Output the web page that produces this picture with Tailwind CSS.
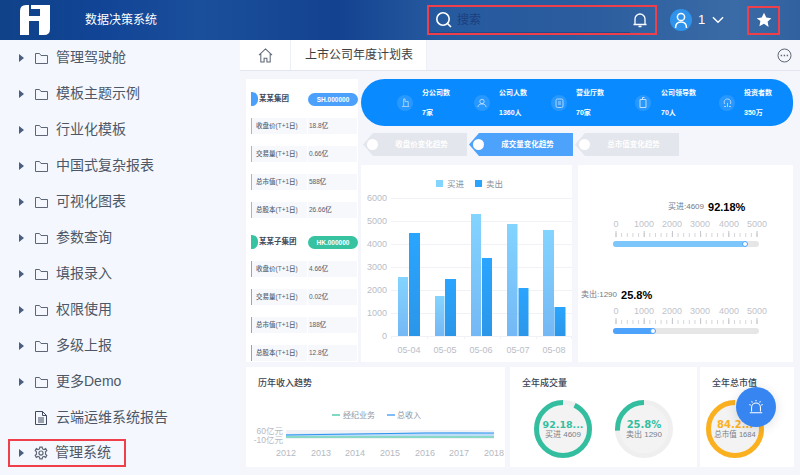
<!DOCTYPE html>
<html lang="zh-CN">
<head>
  <meta charset="UTF-8">
  <title>数据决策系统</title>
  <script src="https://cdn.jsdelivr.net/npm/@tailwindcss/browser@4"></script>
</head>
<body class="w-[800px] h-[475px] overflow-hidden bg-[#f5f6fb] font-['Liberation_Sans','Noto_Sans_CJK_SC',sans-serif]">
  <!-- header -->
  <header class="h-10 flex items-center text-white bg-[linear-gradient(90deg,#0f4288_0%,#114495_12%,#1a4f9c_25%,#134290_42%,#265a9f_55%,#2a5c9e_72%,#3a6ba6_92%,#31629f_100%)]">
    <svg class="ml-5 w-[30px] h-[30px] shrink-0" viewBox="0 0 30 30">
      <path fill="#fff" d="M6 0H9V11H20V4H11V0H30V24Q30 30 24 30H19V16H9V30H0V6Q0 0 6 0Z"/>
    </svg>
    <span class="ml-[35px] text-[12px] w-[342px]">数据决策系统</span>
    <div class="w-[230px] h-[30px] border-2 border-[#ef3f4a] flex items-center pr-[7px]">
      <div class="w-[201px] h-[26px] border-b border-[#1f4b8f] flex items-center pl-[6px]">
        <svg class="w-[18px] h-[18px]" viewBox="0 0 18 18" fill="none" stroke="#fff" stroke-width="1.6"><circle cx="8" cy="8" r="6.2"/><path d="M12.6 12.6L16 16"/></svg>
        <span class="ml-[4px] text-[12px] text-[#1c3f7d]">搜索</span>
      </div>
      <svg class="ml-auto w-[16px] h-[16px]" viewBox="0 0 16 16" fill="none" stroke="#fff" stroke-width="1.3"><path d="M3 12V7a5 5 0 0 1 10 0v5M1.500 12.500h13M6.500 14.500h3"/></svg>
    </div>
    <div class="ml-[13px] w-[22px] h-[22px] rounded-full bg-[#2f93ec] flex items-center justify-center">
      <svg class="w-[16px] h-[18px]" viewBox="0 0 16 18" fill="none" stroke="#fff" stroke-width="1.5"><circle cx="8" cy="6" r="3.600"/><path d="M2.500 17c0-4 2.200-6 5.500-6s5.500 2 5.500 6"/></svg>
    </div>
    <span class="ml-[6px] text-[13px]">1</span>
    <svg class="ml-[7px] w-[12px] h-[8px]" viewBox="0 0 13 8" fill="none" stroke="#fff" stroke-width="1.500"><path d="M1 1l5.500 5.500L12 1"/></svg>
    <div class="ml-[23px] w-[33px] h-[29px] border-2 border-[#ef3f4a] flex items-center justify-center">
      <svg class="w-[16px] h-[16px]" viewBox="0 0 24 24" fill="#fff"><path d="M12 1l3.400 7.200 7.600 1-5.600 5.400 1.500 7.800L12 17.600l-6.900 3.800 1.500-7.800L1 9.200l7.600-1z"/></svg>
    </div>
  </header>

  <div class="flex h-[435px]">
    <!-- sidebar -->
    <nav class="w-[240px] shrink-0 bg-[#f5f7fe] text-[14px] text-[#4e5766]">
      <a class="h-9 flex items-center pl-[19px]"><i class="w-0 h-0 border-y-[4px] border-y-transparent border-l-[5px] border-l-[#4a5f80]"></i><svg class="ml-[11px] w-[13px] h-[11px]" viewBox="0 0 13 11" fill="none" stroke="#5d6675"><path d="M.5 .5h4l1.500 2h6.500v8H.5z"/></svg><span class="ml-[8px] pb-[2px]">管理驾驶舱</span></a>
      <a class="h-9 flex items-center pl-[19px]"><i class="w-0 h-0 border-y-[4px] border-y-transparent border-l-[5px] border-l-[#4a5f80]"></i><svg class="ml-[11px] w-[13px] h-[11px]" viewBox="0 0 13 11" fill="none" stroke="#5d6675"><path d="M.5 .5h4l1.500 2h6.500v8H.5z"/></svg><span class="ml-[8px] pb-[2px]">模板主题示例</span></a>
      <a class="h-9 flex items-center pl-[19px]"><i class="w-0 h-0 border-y-[4px] border-y-transparent border-l-[5px] border-l-[#4a5f80]"></i><svg class="ml-[11px] w-[13px] h-[11px]" viewBox="0 0 13 11" fill="none" stroke="#5d6675"><path d="M.5 .5h4l1.500 2h6.500v8H.5z"/></svg><span class="ml-[8px] pb-[2px]">行业化模板</span></a>
      <a class="h-9 flex items-center pl-[19px]"><i class="w-0 h-0 border-y-[4px] border-y-transparent border-l-[5px] border-l-[#4a5f80]"></i><svg class="ml-[11px] w-[13px] h-[11px]" viewBox="0 0 13 11" fill="none" stroke="#5d6675"><path d="M.5 .5h4l1.500 2h6.500v8H.5z"/></svg><span class="ml-[8px] pb-[2px]">中国式复杂报表</span></a>
      <a class="h-9 flex items-center pl-[19px]"><i class="w-0 h-0 border-y-[4px] border-y-transparent border-l-[5px] border-l-[#4a5f80]"></i><svg class="ml-[11px] w-[13px] h-[11px]" viewBox="0 0 13 11" fill="none" stroke="#5d6675"><path d="M.5 .5h4l1.500 2h6.500v8H.5z"/></svg><span class="ml-[8px] pb-[2px]">可视化图表</span></a>
      <a class="h-9 flex items-center pl-[19px]"><i class="w-0 h-0 border-y-[4px] border-y-transparent border-l-[5px] border-l-[#4a5f80]"></i><svg class="ml-[11px] w-[13px] h-[11px]" viewBox="0 0 13 11" fill="none" stroke="#5d6675"><path d="M.5 .5h4l1.500 2h6.500v8H.5z"/></svg><span class="ml-[8px] pb-[2px]">参数查询</span></a>
      <a class="h-9 flex items-center pl-[19px]"><i class="w-0 h-0 border-y-[4px] border-y-transparent border-l-[5px] border-l-[#4a5f80]"></i><svg class="ml-[11px] w-[13px] h-[11px]" viewBox="0 0 13 11" fill="none" stroke="#5d6675"><path d="M.5 .5h4l1.500 2h6.500v8H.5z"/></svg><span class="ml-[8px] pb-[2px]">填报录入</span></a>
      <a class="h-9 flex items-center pl-[19px]"><i class="w-0 h-0 border-y-[4px] border-y-transparent border-l-[5px] border-l-[#4a5f80]"></i><svg class="ml-[11px] w-[13px] h-[11px]" viewBox="0 0 13 11" fill="none" stroke="#5d6675"><path d="M.5 .5h4l1.500 2h6.500v8H.5z"/></svg><span class="ml-[8px] pb-[2px]">权限使用</span></a>
      <a class="h-9 flex items-center pl-[19px]"><i class="w-0 h-0 border-y-[4px] border-y-transparent border-l-[5px] border-l-[#4a5f80]"></i><svg class="ml-[11px] w-[13px] h-[11px]" viewBox="0 0 13 11" fill="none" stroke="#5d6675"><path d="M.5 .5h4l1.500 2h6.500v8H.5z"/></svg><span class="ml-[8px] pb-[2px]">多级上报</span></a>
      <a class="h-9 flex items-center pl-[19px]"><i class="w-0 h-0 border-y-[4px] border-y-transparent border-l-[5px] border-l-[#4a5f80]"></i><svg class="ml-[11px] w-[13px] h-[11px]" viewBox="0 0 13 11" fill="none" stroke="#5d6675"><path d="M.5 .5h4l1.500 2h6.500v8H.5z"/></svg><span class="ml-[8px] pb-[2px]">更多Demo</span></a>
      <a class="h-9 flex items-center pl-[35px]"><svg class="w-[12px] h-[14px]" viewBox="0 0 12 14" fill="none" stroke="#3f4a5c"><path d="M.5 .5h7l4 4v9H.5zM7.500 .5v4h4M3 7h6M3 9h6M3 11h6"/></svg><span class="ml-[9px] pb-[2px]">云端运维系统报告</span></a>
      <div class="ml-2 w-[118px] h-7 mt-[3px] border-2 border-[#ef3f4a] flex items-center pl-[9px]"><i class="w-0 h-0 border-y-[4px] border-y-transparent border-l-[5px] border-l-[#4a5f80]"></i><svg class="ml-[10px] w-[14px] h-[14px]" viewBox="0 0 24 24" fill="none" stroke="#5d6675" stroke-width="2"><circle cx="12" cy="12" r="3.500"/><path d="M10 2h4l.6 3 2.600 1.100L20 4.500 22 8l-2.300 2 .1 2-.1 2 2.300 2-2 3.500-2.800-1.600-2.600 1.100-.6 3h-4l-.6-3-2.600-1.100L4 19.500 2 16l2.300-2-.1-2 .1-2L2 8l2-3.500 2.800 1.600L9.400 5z"/></svg><span class="ml-[7px] pb-[2px]">管理系统</span></div>
    </nav>

    <main class="relative flex-1 min-w-0">
      <!-- tabs -->
      <div class="h-[31px] flex items-center border-b border-[#e3e6ef] text-[#404040]">
        <div class="w-[51px] h-[30px] bg-white border-r border-[#eceff5] flex items-center justify-center">
          <svg class="w-[15px] h-[15px]" viewBox="0 0 16 16" fill="none" stroke="#5d6675" stroke-width="1.100"><path d="M1 7.500 8 1l7 6.500M3 6v9h3.500v-4h3v4H13V6"/></svg>
        </div>
        <div class="w-[136px] h-[30px] bg-white border-r border-[#eceff5] flex items-center pl-[14px] text-[12px]">上市公司年度计划表</div>
        <svg class="ml-auto mr-[8px] w-[15px] h-[15px]" viewBox="0 0 15 15" fill="none" stroke="#5d6675"><circle cx="7.500" cy="7.500" r="6.500"/><path stroke-width="1.400" stroke-dasharray="1.400 1.600" d="M3.700 7.500h8"/></svg>
      </div>

      <div class="flex pt-2 pl-[6px]">
        <!-- company column -->
        <section class="w-[112px] h-[283px] bg-white pl-[5px] pt-[13px] text-[6.5px] font-medium text-[#56606f]">
          <div class="h-[14px] flex items-center">
            <i class="w-[7px] h-[14px] bg-[#4ba0fb] rounded-r-[6px]"></i>
            <b class="ml-[1px] w-[49px] text-[7.500px] text-[#3f4a5c]">某某集团</b>
            <span class="w-[50px] h-[13px] rounded-full bg-[#4ba0fb] text-white font-bold text-center leading-[13px]">SH.000000</span>
          </div>
          <div class="mt-3 h-4 flex"><span class="w-[56px] bg-[#f7f8fb] border-l border-[#7cc3fa] pl-[4px] leading-4">收盘价(T+1日)</span><span class="ml-[1px] w-[49px] bg-[#f7f8fb] pl-[1px] leading-4">18.8亿</span></div>
          <div class="mt-3 h-4 flex"><span class="w-[56px] bg-[#f7f8fb] border-l border-[#7cc3fa] pl-[4px] leading-4">交易量(T+1日)</span><span class="ml-[1px] w-[49px] bg-[#f7f8fb] pl-[1px] leading-4">0.66亿</span></div>
          <div class="mt-3 h-4 flex"><span class="w-[56px] bg-[#f7f8fb] border-l border-[#7cc3fa] pl-[4px] leading-4">总市值(T+1日)</span><span class="ml-[1px] w-[49px] bg-[#f7f8fb] pl-[1px] leading-4">588亿</span></div>
          <div class="mt-3 h-4 flex"><span class="w-[56px] bg-[#f7f8fb] border-l border-[#7cc3fa] pl-[4px] leading-4">总股本(T+1日)</span><span class="ml-[1px] w-[49px] bg-[#f7f8fb] pl-[1px] leading-4">26.66亿</span></div>
          <div class="mt-[17px] h-[14px] flex items-center">
            <i class="w-[7px] h-[14px] bg-[#37c2a2] rounded-r-[6px]"></i>
            <b class="ml-[1px] w-[49px] text-[7.500px] text-[#3f4a5c]">某某子集团</b>
            <span class="w-[50px] h-[13px] rounded-full bg-[#37c2a2] text-white font-bold text-center leading-[13px]">HK.000000</span>
          </div>
          <div class="mt-3 h-4 flex"><span class="w-[56px] bg-[#f7f8fb] border-l border-[#4fcbae] pl-[4px] leading-4">收盘价(T+1日)</span><span class="ml-[1px] w-[49px] bg-[#f7f8fb] pl-[1px] leading-4">4.66亿</span></div>
          <div class="mt-3 h-4 flex"><span class="w-[56px] bg-[#f7f8fb] border-l border-[#4fcbae] pl-[4px] leading-4">交易量(T+1日)</span><span class="ml-[1px] w-[49px] bg-[#f7f8fb] pl-[1px] leading-4">0.02亿</span></div>
          <div class="mt-3 h-4 flex"><span class="w-[56px] bg-[#f7f8fb] border-l border-[#4fcbae] pl-[4px] leading-4">总市值(T+1日)</span><span class="ml-[1px] w-[49px] bg-[#f7f8fb] pl-[1px] leading-4">188亿</span></div>
          <div class="mt-3 h-4 flex"><span class="w-[56px] bg-[#f7f8fb] border-l border-[#4fcbae] pl-[4px] leading-4">总股本(T+1日)</span><span class="ml-[1px] w-[49px] bg-[#f7f8fb] pl-[1px] leading-4">12.8亿</span></div>
        </section>

        <div class="ml-[3px] w-[432px]">
          <!-- stats banner -->
          <div class="h-[47px] bg-[#0a8aff] rounded-[24px] rounded-r-[22px] pl-[36px] flex items-center text-white text-[7px] font-bold">
            <div class="w-[77px] flex items-center"><span class="w-4 h-4 rounded-full bg-white/12 flex items-center justify-center"><svg class="w-[9px] h-[9px]" viewBox="0 0 10 10" fill="none" stroke="#cfe6ff" stroke-width=".8"><path d="M1 9.500h8M3 9V1h1.500v3H8v5"/></svg></span><div class="ml-[9px] flex flex-col gap-[9px] leading-[11px]"><span>分公司数</span><span>7家</span></div></div>
            <div class="w-[77px] flex items-center"><span class="w-4 h-4 rounded-full bg-white/12 flex items-center justify-center"><svg class="w-[10px] h-[10px]" viewBox="0 0 10 10" fill="none" stroke="#cfe6ff" stroke-width=".8"><circle cx="5" cy="3.500" r="2.200"/><path d="M1 9c0-2 1.500-3 4-3s4 1 4 3"/></svg></span><div class="ml-[9px] flex flex-col gap-[9px] leading-[11px]"><span>公司人数</span><span>1360人</span></div></div>
            <div class="w-[84px] flex items-center"><span class="w-4 h-4 rounded-full bg-white/12 flex items-center justify-center"><svg class="w-[9px] h-[10px]" viewBox="0 0 9 10" fill="none" stroke="#cfe6ff" stroke-width=".8"><rect x="1" y="1" width="7" height="8.500" rx="1.500"/><path d="M3 4h3M3 6h3"/></svg></span><div class="ml-[9px] flex flex-col gap-[9px] leading-[11px]"><span>营业厅数</span><span>70家</span></div></div>
            <div class="w-[84px] flex items-center"><span class="w-4 h-4 rounded-full bg-white/12 flex items-center justify-center"><svg class="w-[8px] h-[11px]" viewBox="0 0 8 11" fill="none" stroke="#cfe6ff" stroke-width=".9"><path d="M1 2.500h6v8H1zM3.500 2.500V.5h2"/></svg></span><div class="ml-[10px] flex flex-col gap-[9px] leading-[11px]"><span>公司领导数</span><span>70人</span></div></div>
            <div class="flex items-center"><span class="w-4 h-4 rounded-full bg-white/12 flex items-center justify-center"><svg class="w-[9px] h-[10px]" viewBox="0 0 9 10" fill="none" stroke="#cfe6ff" stroke-width=".8"><path d="M1.500 6c-1-3 .5-5 3-5s4 2 3 5M1 8.500h2M6 8.500h2M4.500 5v4"/></svg></span><div class="ml-[9px] flex flex-col gap-[9px] leading-[11px]"><span>投资者数</span><span>350万</span></div></div>
          </div>
          <!-- trend tabs -->
          <div class="mt-[7px] ml-[2px] flex gap-[2px] text-[7.500px] font-bold text-white">
            <div class="relative w-[104px] h-[23px] bg-[#e3e6ec] [clip-path:polygon(10px_0,100%_0,100%_100%,10px_100%,0_50%)] flex items-center justify-center pl-[13px]"><i class="absolute left-[4px] top-[6px] w-[11px] h-[11px] rounded-full bg-white"></i>收盘价变化趋势</div>
            <div class="relative w-[104px] h-[23px] bg-[#4da2fb] [clip-path:polygon(10px_0,100%_0,100%_100%,10px_100%,0_50%)] flex items-center justify-center pl-[13px]"><i class="absolute left-[4px] top-[6px] w-[11px] h-[11px] rounded-full bg-white"></i>成交量变化趋势</div>
            <div class="relative w-[104px] h-[23px] bg-[#e3e6ec] [clip-path:polygon(10px_0,100%_0,100%_100%,10px_100%,0_50%)] flex items-center justify-center pl-[13px]"><i class="absolute left-[4px] top-[6px] w-[11px] h-[11px] rounded-full bg-white"></i>总市值变化趋势</div>
          </div>
          <div class="mt-[9px] flex gap-[6px]">
            <!-- bar chart -->
            <div class="w-[211px] h-[197px] bg-white">
              <svg class="block" width="211" height="197" viewBox="361 165 211 197" font-size="9" fill="#b9bdc7">
                <defs>
                  <linearGradient id="buy" x1="0" y1="0" x2="0" y2="1"><stop offset="0" stop-color="#83d4ff"/><stop offset="1" stop-color="#74b8f5"/></linearGradient>
                  <linearGradient id="sell" x1="0" y1="0" x2="0" y2="1"><stop offset="0" stop-color="#2aa5ff"/><stop offset="1" stop-color="#2b96e8"/></linearGradient>
                </defs>
                <rect x="436" y="180" width="7" height="7" fill="#83d4ff"/><text x="447" y="187" font-size="8.500" fill="#8a8f99">买进</text>
                <rect x="475" y="180" width="7" height="7" fill="#2aa5ff"/><text x="486" y="187" font-size="8.500" fill="#8a8f99">卖出</text>
                <path stroke="#f0f2f6" d="M391 198.500h181M391 221.500h181M391 244.500h181M391 267.500h181M391 290.500h181M391 313.500h181M391 336.500h181M391.500 336v3M427.500 336v3M464.500 336v3M500.500 336v3M536.500 336v3M571.500 336v3"/>
                <g text-anchor="end">
                  <text x="387" y="201">6000</text><text x="387" y="224">5000</text><text x="387" y="247">4000</text><text x="387" y="270">3000</text><text x="387" y="293">2000</text><text x="387" y="316">1000</text><text x="387" y="339">0</text>
                </g>
                <g fill="url(#buy)">
                  <rect x="398" y="277" width="10" height="59"/><rect x="435" y="296" width="9.500" height="40"/><rect x="471" y="214" width="10" height="122"/><rect x="507" y="224" width="10.500" height="112"/><rect x="543" y="230" width="11" height="106"/>
                </g>
                <g fill="url(#sell)">
                  <rect x="409" y="233" width="11" height="103"/><rect x="445" y="279" width="11" height="57"/><rect x="482" y="258" width="10" height="78"/><rect x="518.500" y="288" width="10" height="48"/><rect x="554.500" y="307" width="11" height="29"/>
                </g>
                <g text-anchor="middle">
                  <text x="409" y="353">05-04</text><text x="445" y="353">05-05</text><text x="481" y="353">05-06</text><text x="518" y="353">05-07</text><text x="554" y="353">05-08</text>
                </g>
              </svg>
            </div>
            <!-- sliders -->
            <div class="w-[215px] h-[197px] bg-white text-[#737a88] text-[8px]">
              <div class="h-[49px] pl-[90px] flex items-end leading-[14px]"><span>买进:4609</span><b class="ml-[4px] text-[11px] text-black">92.18%</b></div>
              <svg class="block mt-[2px]" width="215" height="42" viewBox="0 0 215 42" font-size="9" fill="#bfc3cb" text-anchor="middle">
                <text x="38" y="11">0</text><text x="66" y="11">1000</text><text x="94" y="11">2000</text><text x="122" y="11">3000</text><text x="151" y="11">4000</text><text x="179" y="11">5000</text>
                <path stroke="#d4d6db" stroke-dasharray="1 4.640" d="M37.500 19H180" stroke-width="4"/>
                <path stroke="#c4c6cc" stroke-dasharray="1 27.200" d="M37.500 18H180" stroke-width="6"/>
                <rect x="35" y="25" width="146" height="6" rx="3" fill="#e6e6e6"/>
                <rect x="35" y="25" width="132" height="6" rx="3" fill="#7cc6fb"/>
                <circle cx="167" cy="28" r="2.500" fill="#fff" stroke="#4da2fb"/>
              </svg>
              <div class="h-[44px] pl-[3px] flex items-end leading-[14px]"><span>卖出:1290</span><b class="ml-[4px] text-[11px] text-black">25.8%</b></div>
              <svg class="block mt-[1px]" width="215" height="42" viewBox="0 0 215 42" font-size="9" fill="#bfc3cb" text-anchor="middle">
                <text x="38" y="11">0</text><text x="66" y="11">1000</text><text x="94" y="11">2000</text><text x="122" y="11">3000</text><text x="151" y="11">4000</text><text x="179" y="11">5000</text>
                <path stroke="#d4d6db" stroke-dasharray="1 4.640" d="M37.500 19H180" stroke-width="4"/>
                <path stroke="#c4c6cc" stroke-dasharray="1 27.200" d="M37.500 18H180" stroke-width="6"/>
                <rect x="35" y="25" width="146" height="6" rx="3" fill="#e6e6e6"/>
                <rect x="35" y="25" width="41" height="6" rx="3" fill="#4da2fb"/>
                <circle cx="75" cy="28" r="2.500" fill="#fff" stroke="#4da2fb"/>
              </svg>
            </div>
          </div>
        </div>
      </div>

      <!-- bottom cards -->
      <div class="mt-[5px] ml-[6px] flex text-[9px] font-medium text-[#3a4454]">
        <div class="w-[259px] h-[100px] bg-white pt-[10px] pl-[12px]">
          <h3 class="leading-[12px]">历年收入趋势</h3>
          <svg class="block -ml-3 max-w-none" width="259" height="78" viewBox="246 389 259 78" font-size="9" font-weight="400" fill="#b5b9c2">
            <path stroke="#7fd9c3" stroke-width="2" d="M332 415h8"/><text x="343" y="418" font-size="8" fill="#9096a1">经纪业务</text>
            <path stroke="#82bcf8" stroke-width="2" d="M387 415h8"/><text x="397" y="418" font-size="8" fill="#9096a1">总收入</text>
            <rect x="286" y="430" width="208" height="9" fill="#f0f2f6"/>
            <path d="M286 434L390 433L459 432L494 433V436H286Z" fill="#bcdcf8"/>
            <path d="M286 435L355 434L425 433L494 433" fill="none" stroke="#2d95f0"/>
            <path d="M286 437H494" stroke="#68d0b6" stroke-width="1.500"/>
            <text x="283" y="433.500" text-anchor="end" font-size="8.500">60亿元</text>
            <text x="283" y="442.500" text-anchor="end" font-size="8.500">-10亿元</text>
            <g text-anchor="middle">
              <text x="286" y="456">2012</text><text x="321" y="456">2013</text><text x="355" y="456">2014</text><text x="390" y="456">2015</text><text x="425" y="456">2016</text><text x="459" y="456">2017</text><text x="494" y="456">2018</text>
            </g>
          </svg>
        </div>
        <div class="ml-[5px] w-[187px] h-[100px] bg-white pt-[10px] pl-[12px]">
          <h3 class="leading-[12px]">全年成交量</h3>
          <div class="mt-[11px] -ml-3 flex pl-6 gap-[23px]">
            <svg class="block" width="58" height="58" viewBox="-29 -29 58 58" text-anchor="middle" font-weight="400">
              <circle r="24" fill="#f3f3f3"/><circle r="26.500" fill="none" stroke="#efefef" stroke-width="5"/>
              <circle r="26.500" fill="none" stroke="#33bf9f" stroke-width="5" stroke-dasharray="153.500 166.500" transform="rotate(-90) scale(1 -1)"/>
              <text y="-1.500" font-family="DejaVu Sans" font-size="9.500" font-weight="700" fill="#33bf9f">92.18...</text>
              <text y="8" font-size="8" fill="#7a7f88">买进 4609</text>
            </svg>
            <svg class="block" width="58" height="58" viewBox="-29 -29 58 58" text-anchor="middle" font-weight="400">
              <circle r="24" fill="#f3f3f3"/><circle r="26.500" fill="none" stroke="#efefef" stroke-width="5"/>
              <circle r="26.500" fill="none" stroke="#33bf9f" stroke-width="5" stroke-dasharray="43 166.500" transform="rotate(-90) scale(1 -1)"/>
              <text y="-1.500" font-family="DejaVu Sans" font-size="10" font-weight="700" fill="#33bf9f">25.8%</text>
              <text y="8" font-size="8" fill="#7a7f88">卖出 1290</text>
            </svg>
          </div>
        </div>
        <div class="ml-[3px] w-[94px] h-[100px] bg-white pt-[10px] pl-[12px]">
          <h3 class="leading-[12px]">全年总市值</h3>
          <svg class="block mt-[11px] -ml-[6px]" width="58" height="58" viewBox="-29 -29 58 58" text-anchor="middle" font-weight="400">
            <circle r="24" fill="#f3f3f3"/><circle r="26.500" fill="none" stroke="#efefef" stroke-width="5"/>
            <circle r="26.500" fill="none" stroke="#fbb01f" stroke-width="5" stroke-dasharray="140 166.500" transform="rotate(-90) scale(1 -1)"/>
            <text y="-1.500" font-family="DejaVu Sans" font-size="10" font-weight="700" fill="#fbb01f">84.2...</text>
            <text y="8" font-size="7.500" fill="#7a7f88">总市值 1684</text>
          </svg>
        </div>
      </div>

      <!-- floating alarm button -->
      <button class="absolute left-[496px] top-[347px] w-10 h-10 rounded-full bg-[#3785f0] shadow-[0_2px_12px_rgba(0,0,0,0.12)] flex items-center justify-center">
        <svg class="w-4 h-4" viewBox="0 0 18 18" fill="none" stroke="#fff" stroke-width="1.200"><path d="M4 14V9.500a5 5 0 0 1 10 0V14M2 15.500h14M1.500 6L3 7M16.500 6L15 7M4 2.500L5 4M14 2.500L13 4M9 1v1.500"/></svg>
      </button>
    </main>
  </div>
</body>
</html>
